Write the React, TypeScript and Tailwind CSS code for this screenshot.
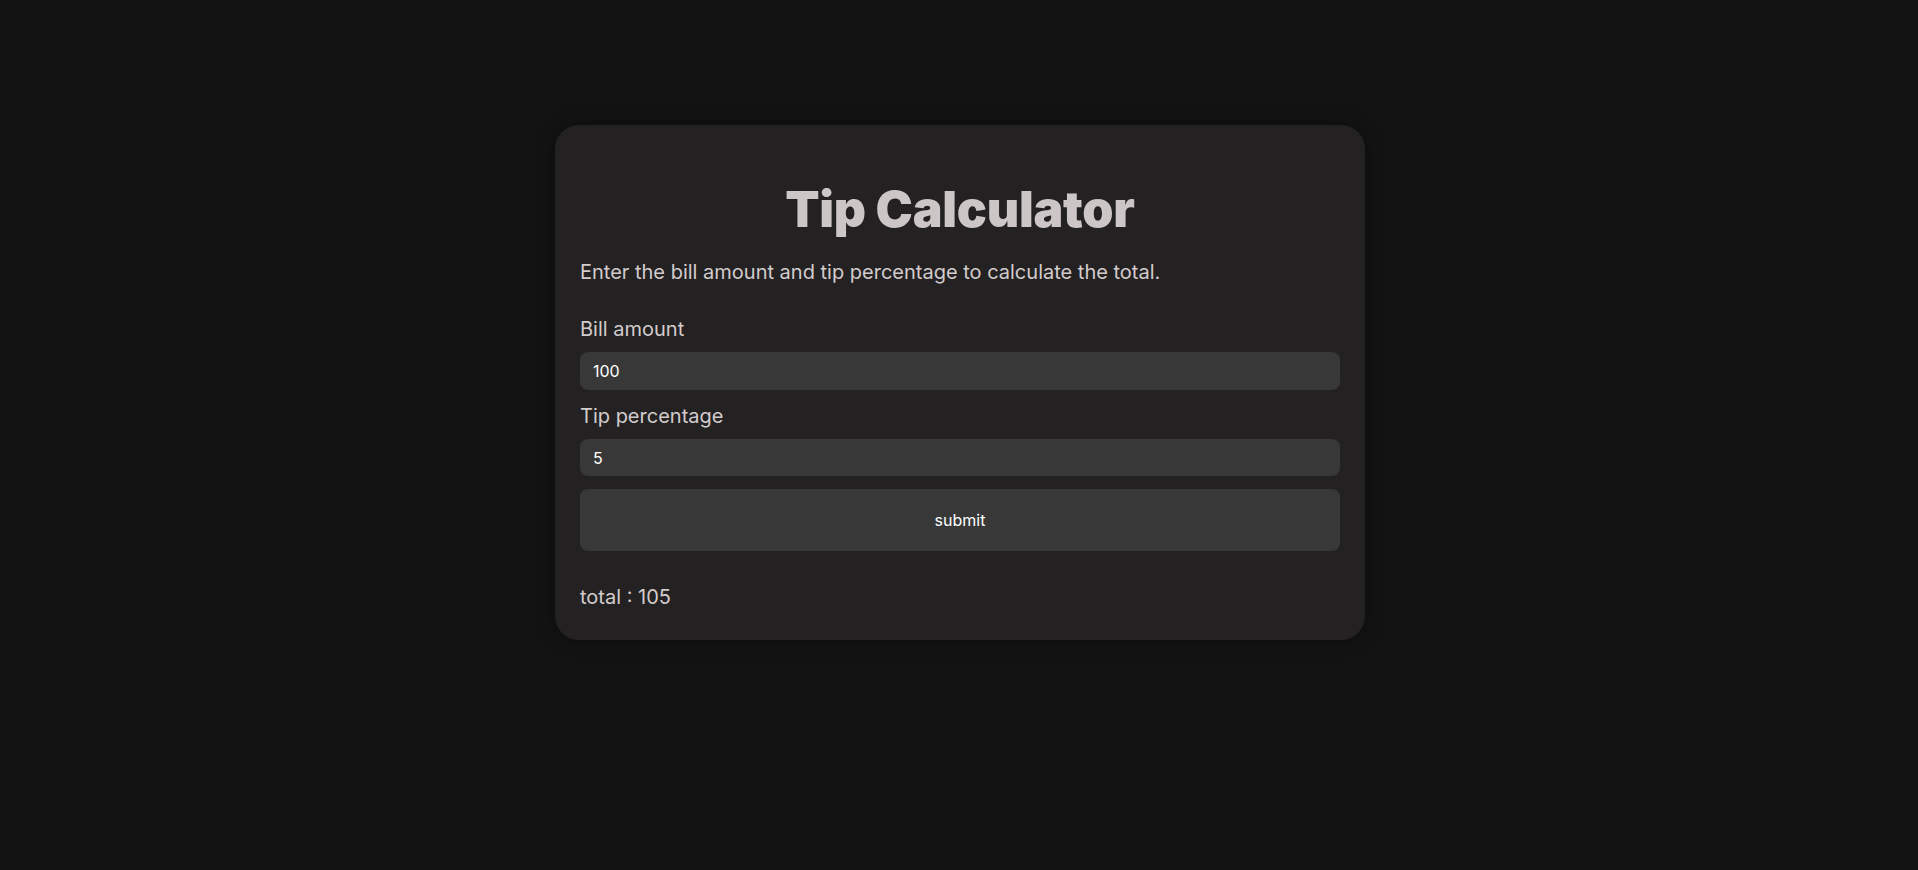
import { useState } from 'react';

const App = () => {
  const [bill, setBill] = useState('100');
  const [tip, setTip] = useState('5');
  const [total, setTotal] = useState(105);

  const handleSubmit = (e: React.FormEvent) => {
    e.preventDefault();
    const b = parseFloat(bill) || 0;
    const t = parseFloat(tip) || 0;
    setTotal(b + (b * t) / 100);
  };

  return (
    <div className="min-h-screen bg-[#131313] flex justify-center pt-[125px] pl-[2px] font-['Inter',sans-serif]">
      <form
        onSubmit={handleSubmit}
        className="w-[810px] self-start rounded-3xl bg-[#232122] px-[25px] pt-[56px] pb-[31px] shadow-[0_0_18px_rgba(0,0,0,0.35)]"
      >
        {/* Header */}
        <h1 className="text-center text-[50px] leading-[56px] font-black tracking-[-0.005em] text-[#cdc6c6] h-[56px]">Tip Calculator</h1>
        <p className="mt-[23px] text-[20px] leading-[24px] text-[#d3cccc]">
          Enter the bill amount and tip percentage to calculate the total.
        </p>

        {/* Fields */}
        <label className="block mt-[33px] text-[20px] leading-[24px] text-[#d3cccc]">Bill amount</label>
        <input
          value={bill}
          onChange={e => setBill(e.target.value)}
          className="mt-[11px] block w-full h-[38px] rounded-lg bg-[#383838] pl-[13px] text-base text-white outline-none"
        />
        <label className="block mt-[14px] text-[20px] leading-[24px] text-[#d3cccc]">Tip percentage</label>
        <input
          value={tip}
          onChange={e => setTip(e.target.value)}
          className="mt-[11px] block w-full h-[37px] rounded-lg bg-[#383838] pl-[13px] text-base text-white outline-none"
        />

        <button type="submit" className="mt-[13px] block w-full h-[62px] rounded-lg bg-[#383838] text-base font-normal text-white">
          submit
        </button>

        <p className="mt-[34px] text-[20px] leading-[24px] text-[#d3cccc]">total : {total}</p>
      </form>
    </div>
  );
};

export default App;
